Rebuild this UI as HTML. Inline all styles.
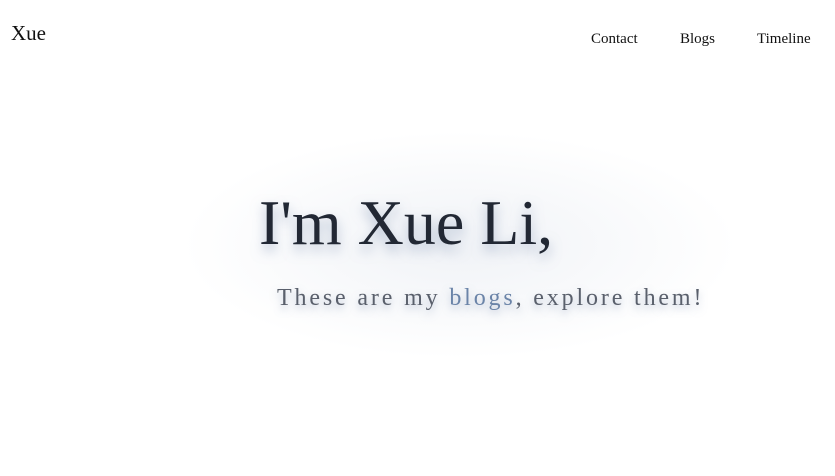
<!DOCTYPE html>
<html><head><style>
body{margin:0;width:835px;height:476px;background:#fff;font-family:"Liberation Serif",serif;overflow:hidden;position:relative;color:#111}
.logo{position:absolute;left:11px;top:21px;font-size:21px}
.nav{position:absolute;top:31px;font-size:15px}
.glow{position:absolute;left:180px;top:130px;width:560px;height:230px;background:radial-gradient(ellipse at center,rgba(225,230,238,.5),rgba(255,255,255,0) 70%)}
h1{position:absolute;left:259px;top:186px;margin:0;font-weight:normal;font-size:64px;color:#222834;text-shadow:0 6px 12px rgba(120,140,175,.55);white-space:nowrap}
.sub{position:absolute;left:277px;top:285px;font-size:24px;letter-spacing:2.85px;color:#5a606c;text-shadow:0 4px 8px rgba(120,140,175,.5);white-space:nowrap}
.sub span{color:#6b84a8}
</style></head><body>
<div class="logo">Xue</div>
<div class="nav" style="left:591px">Contact</div>
<div class="nav" style="left:680px">Blogs</div>
<div class="nav" style="left:757px">Timeline</div>
<div class="glow"></div>
<h1>I'm Xue Li,</h1>
<div class="sub">These are my <span>blogs</span>, explore them!</div>
</body></html>
